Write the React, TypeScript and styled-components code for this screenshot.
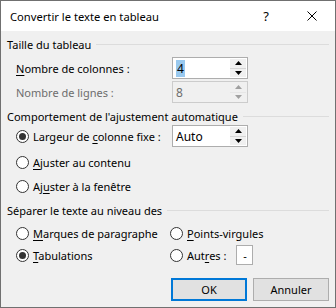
import React from "react";
import styled, { createGlobalStyle } from "styled-components";

const Global = createGlobalStyle`
  html, body { margin: 0; padding: 0; background: #ffffff; }
  body {
    font-family: "Segoe UI", "Noto Sans", "Liberation Sans", sans-serif;
    font-size: 11px;
    color: #000;
  }
  * { box-sizing: border-box; }
`;

const Window = styled.div`
  width: 336px;
  height: 308px;
  border: 1px solid #707070;
  background: #f0f0f0;
  display: flex;
  flex-direction: column;
  white-space: nowrap;
`;

const TitleBar = styled.div`
  height: 30px;
  background: #ffffff;
  display: flex;
  align-items: center;
  padding-left: 9px;
`;

const Title = styled.div`
  flex: 1;
  font-size: 11.2px;
  color: #000;
`;

const TitleButton = styled.div`
  width: 46px;
  height: 30px;
  display: flex;
  align-items: center;
  justify-content: center;
  font-size: 13px;
`;

const Body = styled.div`
  flex: 1;
  display: flex;
  flex-direction: column;
  padding: 6px 6px 0 6px;
`;

const GroupHeader = styled.div<{ $mt?: number }>`
  display: flex;
  align-items: center;
  height: 15px;
  margin-top: ${(p) => p.$mt ?? 0}px;
  gap: 5px;
  &::after {
    content: "";
    flex: 1;
    height: 1px;
    background: #dcdcdc;
  }
`;

const Row = styled.div<{ $mt?: number }>`
  display: flex;
  align-items: center;
  height: 22px;
  padding-left: 9px;
  margin-top: ${(p) => p.$mt ?? 0}px;
`;

const Label = styled.div<{ $disabled?: boolean }>`
  width: 156px;
  color: ${(p) => (p.$disabled ? "#6d6d6d" : "#000")};
`;

const SpinBox = styled.div<{ $disabled?: boolean }>`
  width: 76px;
  height: 22px;
  display: flex;
  border: 1px solid ${(p) => (p.$disabled ? "#cccccc" : "#adadad")};
  background: ${(p) => (p.$disabled ? "#f0f0f0" : "#ffffff")};
  padding: 1px;
`;

const SpinText = styled.div<{ $disabled?: boolean }>`
  flex: 1;
  display: flex;
  align-items: center;
  padding-left: 2px;
  font-size: 12px;
  color: ${(p) => (p.$disabled ? "#6d6d6d" : "#000")};
`;

const Selected = styled.span`
  background: #99c9ef;
  padding: 0 1px;
`;

const SpinButtons = styled.div<{ $disabled?: boolean }>`
  width: 16px;
  display: flex;
  flex-direction: column;
  gap: 1px;
  background: ${(p) => (p.$disabled ? "#e6e6e6" : "#d6d6d6")};
`;

const SpinBtn = styled.div<{ $disabled?: boolean }>`
  flex: 1;
  display: flex;
  align-items: center;
  justify-content: center;
  background: #f0f0f0;
  color: ${(p) => (p.$disabled ? "#a0a0a0" : "#000")};
`;

const RadioRow = styled.div<{ $mt?: number }>`
  display: flex;
  align-items: center;
  height: 22px;
  padding-left: 9px;
  margin-top: ${(p) => p.$mt ?? 0}px;
`;

const RadioItem = styled.div<{ $w?: number }>`
  display: flex;
  align-items: center;
  gap: 4px;
  width: ${(p) => (p.$w ? `${p.$w}px` : "auto")};
`;

const RadioCircle = styled.div<{ $checked?: boolean }>`
  width: 13px;
  height: 13px;
  border-radius: 50%;
  border: 1px solid #333333;
  background: #ffffff;
  display: flex;
  align-items: center;
  justify-content: center;
  flex-shrink: 0;
  &::after {
    content: "";
    display: ${(p) => (p.$checked ? "block" : "none")};
    width: 7px;
    height: 7px;
    border-radius: 50%;
    background: #333333;
  }
`;

const U = styled.span`
  text-decoration: underline;
  text-underline-offset: 2px;
`;

const SmallBox = styled.div`
  width: 17px;
  height: 20px;
  margin-left: 10px;
  border: 1px solid #adadad;
  background: #ffffff;
  display: flex;
  align-items: center;
  justify-content: center;
`;

const Grid = styled.div`
  display: grid;
  grid-template-columns: 154px auto;
  padding-left: 9px;
  margin-top: 4px;
`;

const GridCell = styled.div`
  display: flex;
  align-items: center;
  height: 22px;
`;

const Buttons = styled.div`
  display: flex;
  justify-content: flex-end;
  gap: 6px;
  margin-top: 12px;
`;

const Button = styled.div<{ $primary?: boolean }>`
  width: 76px;
  height: 23px;
  display: flex;
  align-items: center;
  justify-content: center;
  background: #e1e1e1;
  border: ${(p) => (p.$primary ? "2px solid #0078d7" : "1px solid #adadad")};
`;

const Up = () => (
  <svg width="7" height="4" viewBox="0 0 7 4"><path d="M3.5 0 L7 4 L0 4 Z" fill="currentColor" /></svg>
);
const Down = () => (
  <svg width="7" height="4" viewBox="0 0 7 4"><path d="M0 0 L7 0 L3.5 4 Z" fill="currentColor" /></svg>
);

const Spin: React.FC<{ value: React.ReactNode; disabled?: boolean }> = ({ value, disabled }) => (
  <SpinBox $disabled={disabled}>
    <SpinText $disabled={disabled}>{value}</SpinText>
    <SpinButtons $disabled={disabled}>
      <SpinBtn $disabled={disabled}><Up /></SpinBtn>
      <SpinBtn $disabled={disabled}><Down /></SpinBtn>
    </SpinButtons>
  </SpinBox>
);

const CloseIcon = () => (
  <svg width="10" height="10" viewBox="0 0 10 10">
    <path d="M0.5 0.5 L9.5 9.5 M9.5 0.5 L0.5 9.5" stroke="#000" strokeWidth="1" />
  </svg>
);

export default function App() {
  return (
    <>
      <Global />
      <Window>
        <TitleBar>
          <Title>Convertir le texte en tableau</Title>
          <TitleButton>?</TitleButton>
          <TitleButton><CloseIcon /></TitleButton>
        </TitleBar>
        <Body>
          <GroupHeader>Taille du tableau</GroupHeader>
          <Row $mt={5}>
            <Label><U>N</U>ombre de colonnes :</Label>
            <Spin value={<Selected>4</Selected>} />
          </Row>
          <Row $mt={2}>
            <Label $disabled>Nombre de lignes :</Label>
            <Spin value="8" disabled />
          </Row>

          <GroupHeader $mt={6}>Comportement de l'ajustement automatique</GroupHeader>
          <RadioRow $mt={1}>
            <RadioItem $w={156}>
              <RadioCircle $checked />
              <span>Largeur de <U>c</U>olonne fixe :</span>
            </RadioItem>
            <Spin value="Auto" />
          </RadioRow>
          <RadioRow $mt={4}>
            <RadioItem>
              <RadioCircle />
              <span><U>A</U>juster au contenu</span>
            </RadioItem>
          </RadioRow>
          <RadioRow $mt={2}>
            <RadioItem>
              <RadioCircle />
              <span>Aj<U>u</U>ster à la fenêtre</span>
            </RadioItem>
          </RadioRow>

          <GroupHeader $mt={6}>Séparer le texte au niveau des</GroupHeader>
          <Grid>
            <GridCell>
              <RadioItem>
                <RadioCircle />
                <span><U>M</U>arques de paragraphe</span>
              </RadioItem>
            </GridCell>
            <GridCell>
              <RadioItem>
                <RadioCircle />
                <span><U>P</U>oints-virgules</span>
              </RadioItem>
            </GridCell>
            <GridCell>
              <RadioItem>
                <RadioCircle $checked />
                <span><U>T</U>abulations</span>
              </RadioItem>
            </GridCell>
            <GridCell>
              <RadioItem>
                <RadioCircle />
                <span>Aut<U>r</U>es :</span>
              </RadioItem>
              <SmallBox>-</SmallBox>
            </GridCell>
          </Grid>

          <Buttons>
            <Button $primary>OK</Button>
            <Button>Annuler</Button>
          </Buttons>
        </Body>
      </Window>
    </>
  );
}
